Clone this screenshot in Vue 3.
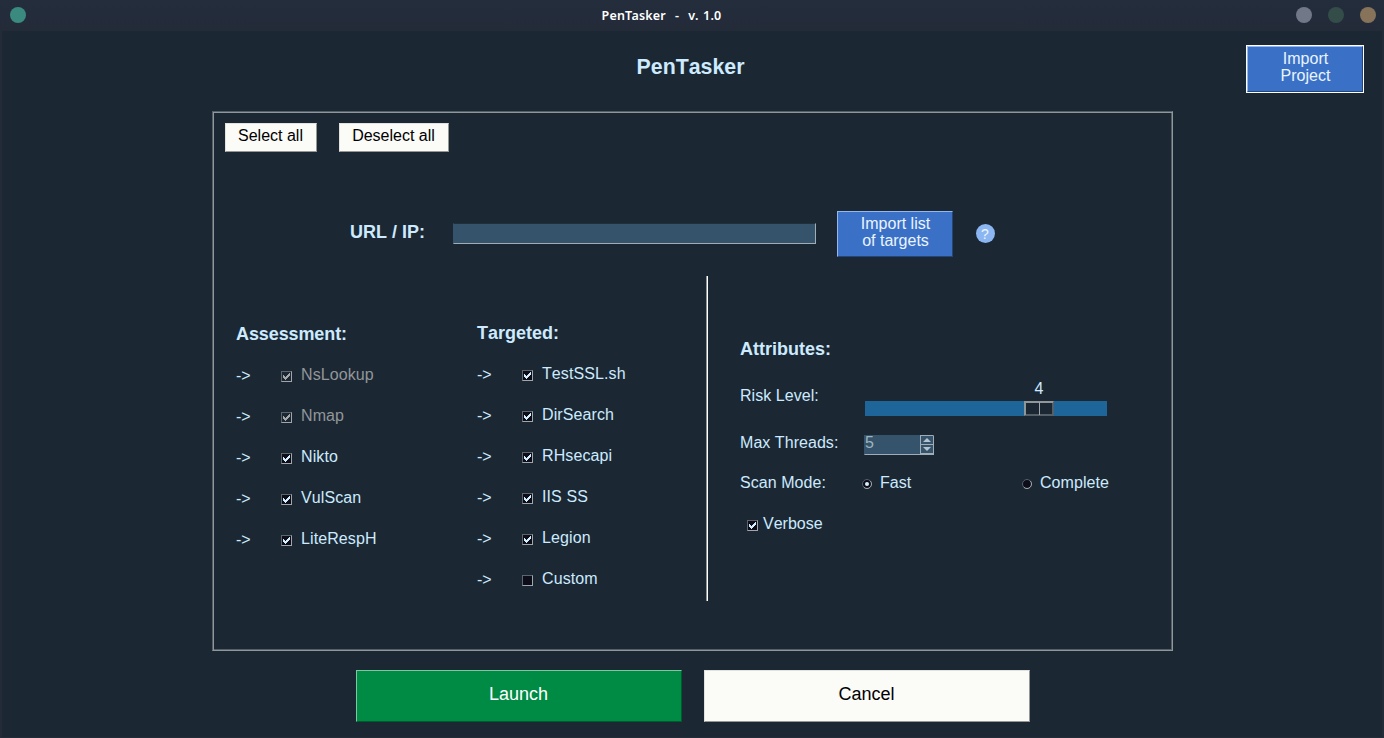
<script setup>
import { ref } from 'vue'

const assessment = ref([
  { name: 'NsLookup', checked: true, disabled: true },
  { name: 'Nmap', checked: true, disabled: true },
  { name: 'Nikto', checked: true },
  { name: 'VulScan', checked: true },
  { name: 'LiteRespH', checked: true },
])
const targeted = ref([
  { name: 'TestSSL.sh', checked: true },
  { name: 'DirSearch', checked: true },
  { name: 'RHsecapi', checked: true },
  { name: 'IIS SS', checked: true },
  { name: 'Legion', checked: true },
  { name: 'Custom', checked: false },
])
const groups = [
  { title: 'Assessment:', items: assessment, cls: 'assessment' },
  { title: 'Targeted:', items: targeted, cls: 'targeted' },
]
const verbose = ref(true)
const mode = ref('Fast')
const toggle = (t) => { if (!t.disabled) t.checked = !t.checked }
const setAll = (v) => {
  for (const t of [...assessment.value, ...targeted.value]) if (!t.disabled) t.checked = v
}
const check = 'M2 4h1v1h1v1h1v-1h1v-1h1v-1h1v-1h1v3h-1v1h-1v1h-1v1h-1v1h-1v-1h-1v-1h-1z'
</script>

<template>
  <div class="window">
    <header class="titlebar">
      <i class="dot teal"></i>
      <span class="caption">PenTasker&nbsp; -&nbsp; v. 1.0</span>
      <span class="controls"><i class="dot grey"></i><i class="dot green"></i><i class="dot tan"></i></span>
    </header>

    <main class="body">
      <div class="top">
        <h1>PenTasker</h1>
        <button class="btn blue project">Import<br>Project</button>
      </div>

      <section class="frame">
        <div class="toolbar">
          <button class="btn light select" @click="setAll(true)">Select all</button>
          <button class="btn light deselect" @click="setAll(false)">Deselect all</button>
        </div>

        <div class="target">
          <span class="bold url">URL / IP:</span>
          <span class="entry"></span>
          <button class="btn blue list">Import list<br>of targets</button>
          <span class="help">?</span>
        </div>

        <div class="columns">
          <div v-for="g in groups" :key="g.title" class="group" :class="g.cls">
            <h2 class="bold">{{ g.title }}</h2>
            <div v-for="t in g.items.value" :key="t.name" class="task" :class="{ disabled: t.disabled }" @click="toggle(t)">
              <span class="arrow">-&gt;</span>
              <span class="box"><svg v-if="t.checked" width="11" height="11" viewBox="0 0 11 11" shape-rendering="crispEdges"><path :d="check" /></svg></span>
              <span class="name">{{ t.name }}</span>
            </div>
          </div>

          <div class="divider"></div>

          <div class="attributes">
            <h2 class="bold">Attributes:</h2>
            <div class="row risk">
              <span class="label">Risk Level:</span>
              <div class="scale">
                <span class="value">4</span>
                <div class="trough"><div class="thumb"><i></i></div></div>
              </div>
            </div>
            <div class="row threads">
              <span class="label">Max Threads:</span>
              <div class="spin">
                <span>5</span>
                <div class="steps">
                  <i><svg width="8" height="4" viewBox="0 0 8 4"><path d="M4 0L8 4H0z" /></svg></i>
                  <i><svg width="8" height="4" viewBox="0 0 8 4"><path d="M0 0H8L4 4z" /></svg></i>
                </div>
              </div>
            </div>
            <div class="row mode">
              <span class="label">Scan Mode:</span>
              <span v-for="m in ['Fast', 'Complete']" :key="m" class="option" @click="mode = m">
                <svg class="radio" width="10" height="10" viewBox="0 0 10 10">
                  <circle cx="5" cy="5" r="4.5" fill="#0d0d1a" stroke="#555f68" />
                  <path d="M8.2 1.8A4.5 4.5 0 0 1 1.8 8.2" fill="none" stroke="#a0a6aa" />
                  <circle v-if="mode === m" cx="5" cy="5" r="2" fill="#d5efff" />
                </svg>{{ m }}
              </span>
            </div>
            <div class="row verbose" @click="verbose = !verbose">
              <span class="box"><svg v-if="verbose" width="11" height="11" viewBox="0 0 11 11" shape-rendering="crispEdges"><path :d="check" /></svg></span>
              <span>Verbose</span>
            </div>
          </div>
        </div>
      </section>

      <footer class="actions">
        <button class="btn launch">Launch</button>
        <button class="btn light cancel">Cancel</button>
      </footer>
    </main>
  </div>
</template>

<style>
body { margin: 0; background: #1b2834; }
</style>

<style scoped>
.window {
  box-sizing: border-box; width: 1384px; height: 738px; overflow: hidden;
  background: #1b2834; color: #cdeafe;
  font: 16px/20px "Liberation Sans", Arial, sans-serif; font-kerning: none;
  display: flex; flex-direction: column;
}
.titlebar {
  height: 31px; flex: none; box-sizing: border-box; padding: 0 8px 1px 10px;
  display: grid; grid-template-columns: 1fr auto 1fr; align-items: center;
  background: linear-gradient(#242d3c, #232b39);
}
.caption {
  font: 600 12.5px/20px "Noto Sans", sans-serif; letter-spacing: 0.2px; word-spacing: 1.1px;
  color: #fff; padding-top: 1px; margin-right: 63px;
}
.controls { display: flex; gap: 16px; justify-content: flex-end; }
.dot { width: 16px; height: 16px; border-radius: 50%; }
.teal { background: #3b8a80; }
.grey { background: #717989; }
.green { background: #344d49; }
.tan { background: #87735a; }
.body {
  flex: 1; display: flex; flex-direction: column; box-sizing: border-box;
  border: solid #232b39; border-width: 0 2px 1px 2px;
}
.top { height: 80px; flex: none; display: grid; grid-template-columns: 1fr auto 1fr; align-items: start; }
h1 { grid-column: 2; margin: 23px 0 0 -3px; font-size: 21.33px; line-height: 26px; font-weight: bold; }
.btn {
  box-sizing: border-box; margin: 0; padding: 0 0 4px; border: 1px solid; border-radius: 0;
  font: inherit; line-height: 17px; text-align: center; flex: none;
}
.blue { background: #3a71c6; color: #eaf4ff; border-color: #94b7f0 #244578 #244578 #94b7f0; padding-left: 1px; }
.light { background: #fbfbf8; color: #000; border-color: #e2e2df #969693 #969693 #e2e2df; padding-right: 1px; }
.project { justify-self: end; width: 116px; height: 46px; margin: 15px 19px 0 0; outline: 1px solid #fff; }
.frame {
  box-sizing: border-box; flex: none; width: 961px; height: 540px; margin-left: 210px;
  border: 1px solid; border-color: #555f68 #90979b #90979b #555f68;
  box-shadow: inset 1px 1px #90979b, inset -1px -1px #555f68;
}
.toolbar { display: flex; gap: 22px; padding: 11px 0 0 12px; height: 29px; }
.select { width: 92px; }
.deselect { width: 110px; }
.target { display: flex; align-items: center; height: 46px; margin: 59px 0 0 137px; }
.bold { font-size: 18px; line-height: 22px; font-weight: bold; margin: 0; }
.url { width: 103px; padding-bottom: 4px; }
.entry {
  box-sizing: border-box; width: 363px; height: 21px; margin: 0 21px 2px 0;
  background: #35536a; border: 1px solid; border-color: #1f303d #a1adb6 #a1adb6 #35536a;
}
.list { width: 116px; height: 46px; }
.help {
  width: 19px; height: 19px; margin: 0 0 1px 22.5px; border-radius: 50%; background: #8bb6f2;
  color: #eef6ff; font-size: 14px; line-height: 20px; text-align: center;
}
.columns { display: flex; height: 325px; margin-top: 19px; }
.group { box-sizing: border-box; }
.assessment { width: 241px; margin-left: 23px; padding-top: 47px; }
.targeted { width: 229px; padding-top: 46px; }
.group h2 { margin-bottom: 9px; }
.assessment h2 { letter-spacing: -0.1px; }
.task { height: 41px; display: flex; align-items: center; }
.name { letter-spacing: 0.1px; }
.arrow { width: 45px; padding-top: 2px; }
.box {
  box-sizing: border-box; width: 11px; height: 11px; margin: 4px 9px 0 0; flex: none;
  background: #0d0d1a; border: 1px solid; border-color: #5d666d #a0a6aa #a0a6aa #5d666d;
}
.box svg { display: block; margin: -1px; fill: #d5efff; }
.disabled { color: #929699; }
.disabled .arrow { color: #cdeafe; }
.disabled .box { background: #1b2834; }
.disabled .box svg { fill: #a5a8aa; }
.divider { width: 1px; background: #fff; border-left: 1px solid #90979b; }
.attributes { margin-left: 32px; padding-top: 62px; }
.row { display: flex; align-items: center; }
.label { width: 124px; letter-spacing: 0.05px; }
.risk { height: 56px; margin-top: 2px; align-items: flex-start; }
.risk .label { margin-top: 24px; width: 125px; }
.scale { width: 242px; padding-top: 16px; }
.value { display: block; width: 20px; margin-left: 164px; line-height: 21px; text-align: center; }
.trough { height: 15px; margin-top: 2px; background: #1e6599; padding-left: 159px; }
.thumb {
  box-sizing: border-box; width: 30px; height: 15px; background: #1b2834;
  border: 1px solid; border-color: #90979b #555f68 #555f68 #90979b;
  box-shadow: inset 1px 1px #90979b, inset -1px -1px #555f68;
}
.thumb i { display: block; box-sizing: border-box; width: 15px; height: 13px; border-right: 1px solid #a0a6aa; }
.threads { height: 20px; margin-top: 15px; }
.spin {
  box-sizing: border-box; width: 70px; height: 20px; margin-top: 4px; display: flex;
  background: #35536a; border: 1px solid; border-color: #35536a #a1adb6 #a1adb6 #35536a;
  line-height: 13px; color: #9fb3bd;
}
.spin span { flex: 1; }
.steps { width: 13px; display: flex; flex-direction: column; border: 1px solid #a1adb6; border-right: 0; margin-top: -1px; box-sizing: border-box; }
.steps i { flex: 1; display: flex; align-items: center; justify-content: center; }
.steps i + i { border-top: 1px solid #a1adb6; }
.steps svg { display: block; fill: #b4c5d0; }
.mode { height: 20px; margin-top: 20px; }
.mode .label { width: 122px; }
.option { width: 160px; display: flex; align-items: center; letter-spacing: 0.05px; }
.option + .option { width: 100px; }
.radio { margin: 2px 8px 0 0; }
.verbose { height: 20px; margin: 21px 0 0 7px; }
.verbose .box { margin: 2px 5px 0 0; }
.actions { display: flex; gap: 22px; margin: 19px 0 0 354px; }
.actions .btn { width: 326px; height: 52px; font-size: 18px; line-height: 22px; padding-right: 1px; }
.launch { background: #008b45; color: #fff; border-color: #80c5a2 #005c2e #005c2e #80c5a2; }
</style>
